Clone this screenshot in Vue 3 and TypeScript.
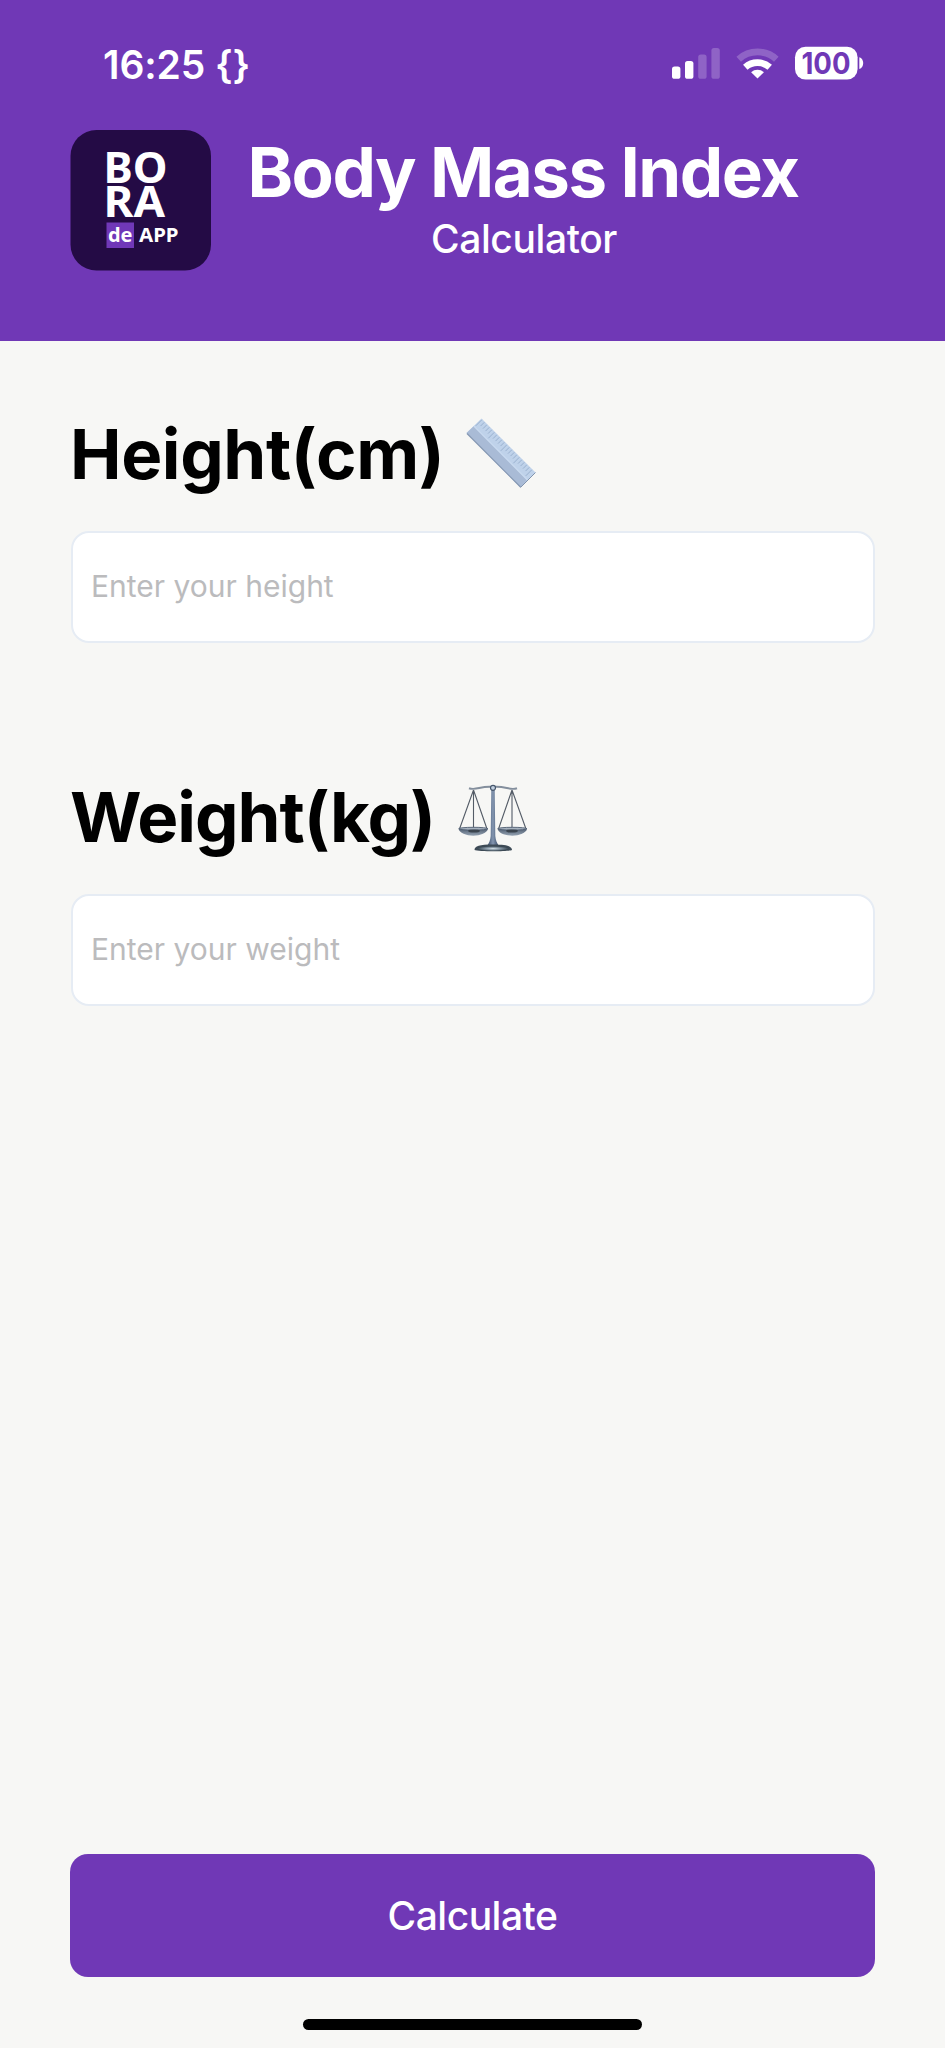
<script setup lang="ts">
import { ref } from 'vue'

const height = ref('')
const weight = ref('')
const ticks = Array.from({ length: 21 }, (_, i) => ({
  x: 15.8 + i * 2.5,
  y: 1.8 + i * 2.5,
  len: i % 5 === 0 ? 6 : 3.8,
}))
</script>

<template>
  <div class="screen">
    <header class="header">
      <div class="status">
        <span class="time">16:25 <span class="focus">{}</span></span>
        <svg class="indicators" width="200" height="40" viewBox="0 0 200 40">
          <g fill="#fff">
            <rect x="6" y="22.5" width="8.4" height="12.3" rx="2.6" />
            <rect x="19" y="17" width="8.4" height="17.8" rx="2.6" />
            <rect x="32.2" y="10.5" width="8.4" height="24.3" rx="2.6" opacity=".22" />
            <rect x="45.4" y="4" width="8.4" height="30.8" rx="2.6" opacity=".22" />
          </g>
          <g fill="none" stroke="#fff">
            <path d="M72.7 15.2a28 28 0 0 1 37.6 0" stroke-width="6.8" opacity=".22" />
            <path d="M79.3 23.2a18.5 18.5 0 0 1 24.4 0" stroke-width="6.8" />
          </g>
          <path d="M91.5 34.6l-6.4-6.3a9.6 9.6 0 0 1 12.8 0z" fill="#fff" />
          <rect x="129" y="2.7" width="62.6" height="32.8" rx="10.5" fill="#fff" />
          <path d="M193.3 13.3c5.2 1.4 5.2 10.4 0 11.8z" fill="#fff" />
          <text x="160" y="29.5" text-anchor="middle" class="charge" textLength="49" lengthAdjust="spacingAndGlyphs">100</text>
        </svg>
      </div>
      <div class="brand">
        <svg class="logo" width="141" height="141" viewBox="0 0 141 141">
          <rect x=".5" width="140.500" height="140.500" rx="26" fill="#240b45" />
          <g class="logo-text" fill="#fff">
            <text x="33.6" y="52.5" font-size="42.5" textLength="64" lengthAdjust="spacingAndGlyphs">BO</text>
            <text x="33.6" y="87.2" font-size="42.5" textLength="61.5" lengthAdjust="spacingAndGlyphs">RA</text>
            <rect x="36.500" y="92.5" width="27.500" height="25.5" fill="#7038b8" />
            <text x="37.9" y="112" font-size="19" textLength="24.5" lengthAdjust="spacingAndGlyphs">de</text>
            <text x="69" y="112" font-size="19" textLength="39.5" lengthAdjust="spacingAndGlyphs">APP</text>
          </g>
        </svg>
        <div class="titles">
          <h1>Body Mass Index</h1>
          <p>Calculator</p>
        </div>
      </div>
    </header>

    <main class="form">
      <section class="field">
        <label class="label" for="height">
          <span class="label-height">Height(cm)</span>
          <svg class="ruler" width="70" height="70" viewBox="0 0 70 70">
            <path d="M.5 15L15.500 .5L69.500 54.500L54.500 69.500z" fill="#bfd2ea" />
            <path d="M.5 15L8 8L61.500 61.500L54.500 69.500z" fill="#a9bbd6" />
            <path d="M7.800 8.200L61.500 62" stroke="#cbdcf1" stroke-width="1.200" />
            <path d="M1 15.500L54.500 69" stroke="#8799b3" stroke-width="1.200" />
            <path d="M54.500 69.500L69.500 54.500" stroke="#8395ae" stroke-width="1" />
            <line v-for="(t, i) in ticks" :key="i" :x1="t.x" :y1="t.y" :x2="t.x - t.len" :y2="t.y + t.len" stroke="#8fa7c7" stroke-width=".8" />
          </svg>
        </label>
        <input id="height" v-model="height" placeholder="Enter your height" />
      </section>

      <section class="field">
        <label class="label" for="weight">
          <span class="label-weight">Weight(kg)</span>
          <svg class="scales" width="70" height="70" viewBox="0 0 70 70">
            <defs>
              <linearGradient id="pole" x1="0" x2="1">
                <stop offset="0" stop-color="#3c4f6c" />
                <stop offset=".5" stop-color="#8496b0" />
                <stop offset="1" stop-color="#384b68" />
              </linearGradient>
              <linearGradient id="pan" x1="0" x2="0" y1="0" y2="1">
                <stop offset="0" stop-color="#4f5d70" />
                <stop offset="1" stop-color="#93a1b1" />
              </linearGradient>
              <radialGradient id="base">
                <stop offset="0" stop-color="#d3e0e6" />
                <stop offset=".5" stop-color="#8292a0" />
                <stop offset="1" stop-color="#35434e" />
              </radialGradient>
            </defs>
            <g fill="none" stroke="#545c67" stroke-width="1.100">
              <path d="M15.500 6L1.500 45M15.500 6V45M15.500 6L29 45" />
              <path d="M54 6L40.500 45M54 6V45M54 6L68 45" />
            </g>
            <path d="M11 4.200C18 7 23 1.500 35 3C47 1.500 52 7 59 4.200" fill="none" stroke="#848f9d" stroke-width="2" />
            <path d="M33.300 6h3.400l.6 46c.4 4.500 1.700 7 3.300 9.500H29.400c1.600-2.500 2.900-5 3.300-9.500z" fill="url(#pole)" />
            <circle cx="35" cy="3.800" r="2.500" fill="#c1cfdf" stroke="#46566c" stroke-width="1.200" />
            <path d="M.5 44.500C2 54 28.500 54 30 44.500z" fill="url(#pan)" />
            <path d="M39.500 44.500C41 54 67.500 54 69 44.500z" fill="url(#pan)" />
            <g fill="#a7b2bf" stroke="#4e5c71" stroke-width=".9">
              <ellipse cx="15.300" cy="44.700" rx="14.500" ry="1.400" />
              <ellipse cx="54.300" cy="44.700" rx="14.500" ry="1.400" />
            </g>
            <ellipse cx="16" cy="47" rx="6" ry="1.600" fill="#3b444e" />
            <ellipse cx="54" cy="47" rx="6" ry="1.600" fill="#3b444e" />
            <path d="M16.500 66c0-4 5-5.500 18.500-5.500S54 62 54 66c-3 1.700-34 1.700-37.500 0z" fill="#3e4b57" />
            <ellipse cx="35" cy="64.600" rx="16" ry="2.500" fill="url(#base)" />
          </svg>
        </label>
        <input id="weight" v-model="weight" placeholder="Enter your weight" />
      </section>
    </main>

    <footer class="footer">
      <button type="button">Calculate</button>
      <div class="home-bar"></div>
    </footer>
  </div>
</template>

<style>
html,
body {
  margin: 0;
  background: #f7f7f5;
}
</style>

<style scoped>
* {
  box-sizing: border-box;
}
.screen {
  width: 945px;
  height: 2048px;
  display: flex;
  flex-direction: column;
  background: #f7f7f5;
  font-family: Inter, "Liberation Sans", sans-serif;
  overflow: hidden;
}
.header {
  height: 341px;
  flex: none;
  background: #7038b6;
  color: #fff;
}
.status {
  height: 130px;
  padding: 44px 79px 0 103px;
  display: flex;
  justify-content: space-between;
  align-items: flex-start;
}
.time {
  font-size: 39px;
  line-height: 42px;
  font-weight: 600;
  letter-spacing: -0.1px;
  white-space: pre;
}
.charge {
  font: 700 30px Inter, sans-serif;
  fill: #7038b6;
}
.logo-text {
  font-family: "Noto Sans", sans-serif;
  font-weight: 700;
}
.brand {
  display: flex;
  padding-left: 70px;
}
.logo {
  display: block;
  flex: none;
}
.titles {
  margin-left: 34px;
  width: 556px;
  text-align: center;
  white-space: nowrap;
}
h1 {
  margin: 0;
  font-size: 69px;
  line-height: 85px;
  font-weight: 700;
  letter-spacing: -1.5px;
}
.titles p {
  margin: 0;
  padding-left: 2px;
  font-size: 39px;
  line-height: 47px;
  font-weight: 450;
  letter-spacing: -0.4px;
}
.form {
  padding: 0 70px;
  flex: 1;
}
.field {
  height: 363px;
  padding-top: 70px;
}
.label {
  display: flex;
  height: 119px;
  font-size: 69px;
  line-height: 86px;
  font-weight: 700;
  color: #000;
}
.label span {
  white-space: nowrap;
  flex: none;
}
.label-height {
  width: 396px;
  letter-spacing: -0.4px;
}
.label-weight {
  width: 388px;
  letter-spacing: -1px;
}
.ruler {
  margin-top: 7px;
}
.scales {
  margin-top: 10px;
}
input {
  display: block;
  width: 804px;
  height: 112px;
  margin-left: 1px;
  margin-top: 1px;
  border: 2px solid #e6ecf4;
  border-radius: 18px;
  background: #fff;
  padding: 0 18px 2px;
  font: 400 30px Inter, "Liberation Sans", sans-serif;
  outline: none;
}
input::placeholder {
  color: #bbbbbd;
  opacity: 1;
}
.footer {
  height: 194px;
  padding: 0 70px;
}
button {
  display: block;
  width: 805px;
  height: 123px;
  border: 0;
  border-radius: 18px;
  background: #7038b6;
  color: #fff;
  font: 450 39px Inter, "Liberation Sans", sans-serif;
  letter-spacing: -0.5px;
}
.home-bar {
  width: 339px;
  height: 11px;
  margin: 42px auto 0;
  border-radius: 6px;
  background: #000;
}
</style>
